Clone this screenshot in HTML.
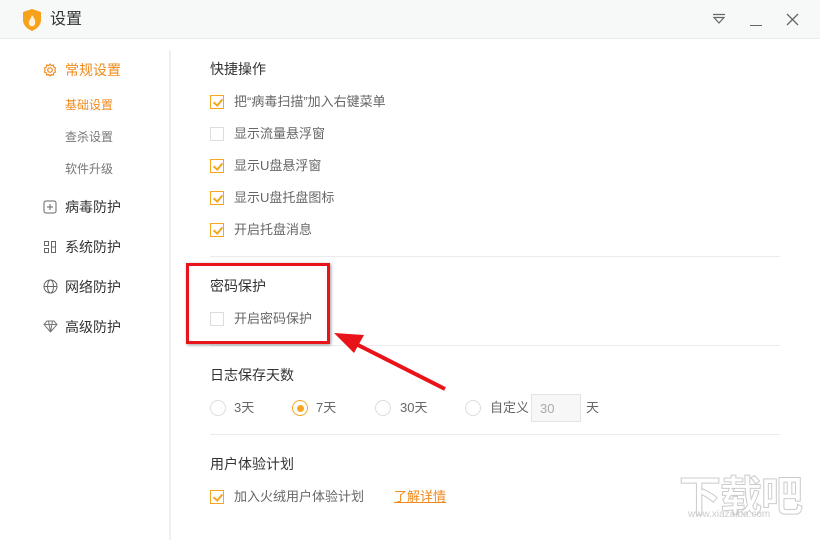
<!DOCTYPE html><html><head><meta charset="utf-8"><style>
*{margin:0;padding:0;box-sizing:border-box}
body{width:820px;height:540px;background:#fff;font-family:"Liberation Sans","Noto Sans CJK SC",sans-serif;position:relative;overflow:hidden;color:#333}
.a{position:absolute;white-space:nowrap;line-height:1}
.t{font-size:13px;color:#666}
.h{font-size:14px;color:#333}
.cb{position:absolute;width:14px;height:14px;border:1px solid #f5a623;background:#fff}
.cb.off{border-color:#ddd}
.cb.on::after{content:"";position:absolute;left:4px;top:1px;width:4px;height:7px;border-right:2px solid #f5a623;border-bottom:2px solid #f5a623;transform:rotate(40deg)}
.rd{position:absolute;width:16px;height:16px;border:1px solid #ddd;border-radius:50%}
.nav{font-size:14px;color:#333}
.sub{font-size:12px;color:#777}
.line{position:absolute;left:210px;width:570px;height:1px;background:#ebebeb}
</style></head><body>
<div class="a" style="left:0;top:0;width:820px;height:39px;background:#f7f8f8;border-bottom:1px solid #ececec"></div>
<svg class="a" style="left:22px;top:9px" width="20" height="22" viewBox="0 0 20 22"><path d="M10 0L19 3V11C19 16 15 20 10 22C5 20 1 16 1 11V3Z" fill="#f7a21b"/><path d="M10 6C12 9 14 11 13 15C12 18 8 18 7 15C6 12 9 10 10 6Z" fill="#fff" opacity=".85"/></svg>
<div class="a" style="left:50px;top:12px;font-size:16px;color:#333">设置</div>
<svg class="a" style="left:712px;top:13px" width="14" height="12"><path d="M1 1.5H13M2 4.5H12L7 10Z" stroke="#666" stroke-width="1.2" fill="none"/></svg>
<div class="a" style="left:750px;top:25px;width:12px;height:1.3px;background:#666"></div>
<svg class="a" style="left:786px;top:13px" width="13" height="13"><path d="M1 1L12 12M12 1L1 12" stroke="#666" stroke-width="1.3"/></svg>
<div class="a" style="left:169px;top:50px;width:2px;height:490px;background:#f0f0f0"></div>
<svg class="a" style="left:43px;top:63px" width="14" height="14" viewBox="0 0 14 14"><circle cx="7" cy="7" r="2.3" fill="none" stroke="#f08a1c" stroke-width="1.2"/><path d="M7 1L8.3 2.6 10.3 2 10.7 4 12.6 5 11.8 7 12.6 9 10.7 10 10.3 12 8.3 11.4 7 13 5.7 11.4 3.7 12 3.3 10 1.4 9 2.2 7 1.4 5 3.3 4 3.7 2 5.7 2.6Z" fill="none" stroke="#f08a1c" stroke-width="1.1"/></svg>
<div class="a nav" style="left:65px;top:63px;color:#f08a1c">常规设置</div>
<div class="a sub" style="left:65px;top:99px;color:#f08a1c">基础设置</div>
<div class="a sub" style="left:65px;top:131px">查杀设置</div>
<div class="a sub" style="left:65px;top:163px">软件升级</div>
<svg class="a" style="left:43px;top:200px" width="14" height="14"><rect x="1" y="1" width="12" height="12" rx="2" fill="none" stroke="#666"/><path d="M7 4V10M4 7H10" stroke="#666"/></svg>
<div class="a nav" style="left:65px;top:200px">病毒防护</div>
<svg class="a" style="left:43px;top:240px" width="14" height="14"><path d="M1.5 1.5H5.5V5.5H1.5ZM1.5 8.5H5.5V12.5H1.5ZM8.5 1.5H12.5V12.5H8.5ZM8.5 7H12.5" fill="none" stroke="#666"/></svg>
<div class="a nav" style="left:65px;top:240px">系统防护</div>
<svg class="a" style="left:43px;top:279px" width="15" height="15"><circle cx="7.5" cy="7.5" r="6.5" fill="none" stroke="#666"/><ellipse cx="7.5" cy="7.5" rx="3" ry="6.5" fill="none" stroke="#666"/><path d="M1 7.5H14" stroke="#666"/></svg>
<div class="a nav" style="left:65px;top:280px">网络防护</div>
<svg class="a" style="left:43px;top:320px" width="15" height="13"><path d="M4 1H11L14 4.5 7.5 12 1 4.5ZM1 4.5H14M5.5 1 7.5 12 9.5 1" fill="none" stroke="#777"/></svg>
<div class="a nav" style="left:65px;top:320px">高级防护</div>

<div class="a h" style="left:210px;top:62px">快捷操作</div>
<div class="cb on" style="left:210px;top:95px"></div><div class="a t" style="left:234px;top:95px">把“病毒扫描”加入右键菜单</div>
<div class="cb off" style="left:210px;top:127px"></div><div class="a t" style="left:234px;top:127px">显示流量悬浮窗</div>
<div class="cb on" style="left:210px;top:159px"></div><div class="a t" style="left:234px;top:159px">显示U盘悬浮窗</div>
<div class="cb on" style="left:210px;top:191px"></div><div class="a t" style="left:234px;top:191px">显示U盘托盘图标</div>
<div class="cb on" style="left:210px;top:223px"></div><div class="a t" style="left:234px;top:223px">开启托盘消息</div>
<div class="line" style="top:256px"></div>
<div class="a h" style="left:210px;top:279px">密码保护</div>
<div class="cb off" style="left:210px;top:312px"></div><div class="a t" style="left:234px;top:312px">开启密码保护</div>
<div class="line" style="top:345px"></div>
<div class="a h" style="left:210px;top:368px">日志保存天数</div>
<div class="rd" style="left:210px;top:400px"></div><div class="a t" style="left:234px;top:401px">3天</div>
<div class="rd" style="left:292px;top:400px;border-color:#f5a623"><div style="position:absolute;left:3.5px;top:3.5px;width:7px;height:7px;border-radius:50%;background:#f5a623"></div></div><div class="a t" style="left:316px;top:401px">7天</div>
<div class="rd" style="left:375px;top:400px"></div><div class="a t" style="left:400px;top:401px">30天</div>
<div class="rd" style="left:465px;top:400px"></div><div class="a t" style="left:490px;top:401px">自定义</div>
<div class="a" style="left:531px;top:394px;width:50px;height:28px;border:1px solid #e5e5e5;background:#f7f7f7;font-size:13px;color:#aaa;padding:7px 0 0 8px">30</div>
<div class="a t" style="left:586px;top:401px">天</div>
<div class="line" style="top:434px"></div>
<div class="a h" style="left:210px;top:457px">用户体验计划</div>
<div class="cb on" style="left:210px;top:490px"></div><div class="a t" style="left:234px;top:490px">加入火绒用户体验计划</div>
<div class="a" style="left:394px;top:490px;font-size:13px;color:#f08a1c;text-decoration:underline">了解详情</div>

<div class="a" style="left:186px;top:263px;width:144px;height:81px;border:3px solid #e8141a;box-shadow:1px 1px 3px rgba(0,0,0,.4)"></div>
<svg class="a" style="left:330px;top:325px" width="120" height="70"><line x1="115" y1="64" x2="22" y2="17" stroke="#e8141a" stroke-width="4"/><path d="M4 8L34 10 24 28Z" fill="#e8141a"/></svg>
<div class="a" style="left:679px;top:476px;font-size:42px;font-weight:bold;color:#fff;-webkit-text-stroke:1px #ccc;letter-spacing:-1px">下载吧</div>
<div class="a" style="left:688px;top:510px;font-size:10px;color:#ccc">www.xiazaiba.com</div>
</body></html>
